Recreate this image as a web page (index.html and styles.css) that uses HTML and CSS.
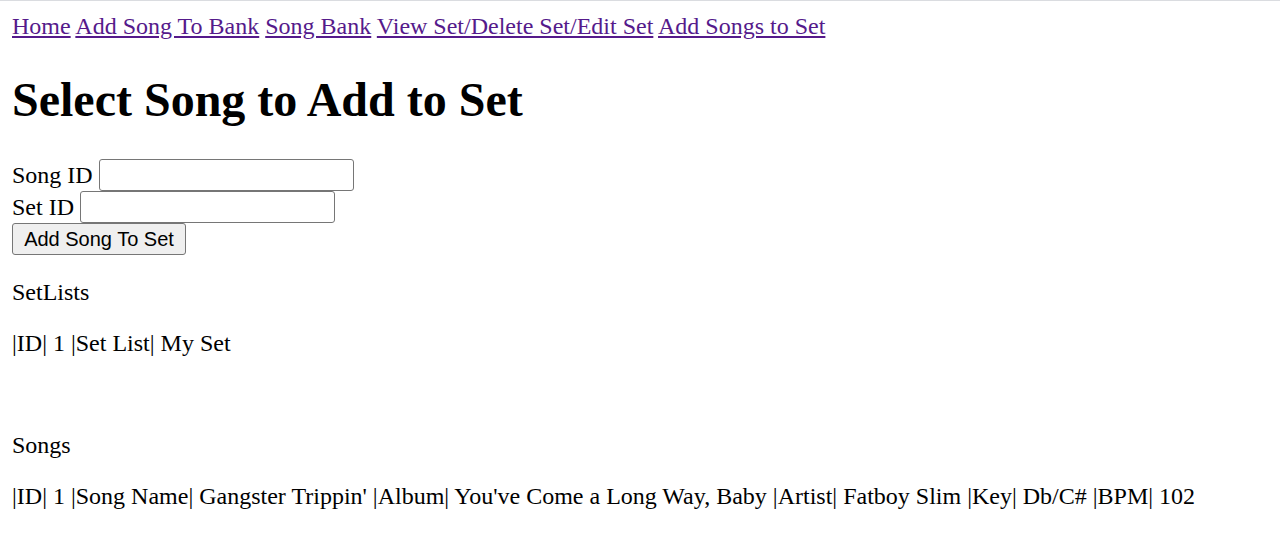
FILE: index.html
```html
<!DOCTYPE html>
<html>
<head>
<meta charset="utf-8">
<title>Add Songs to Set</title>
<link rel="stylesheet" href="styles.css">
</head>
<body>
<nav class="nav"><a href="#">Home</a> <a href="#">Add Song To Bank</a> <a href="#">Song Bank</a> <a href="#">View Set/Delete Set/Edit Set</a> <a href="#">Add Songs to Set</a></nav>
<h1 class="title">Select Song to Add to Set</h1>
<form class="form">
  <div class="row"><label>Song ID</label> <input class="field" type="text"></div>
  <div class="row"><label>Set ID</label> <input class="field" type="text"></div>
  <button class="btn" type="button">Add Song To Set</button>
</form>
<p class="para">SetLists</p>
<p class="para">|ID| 1 |Set List| My Set</p>
<p class="para gap">Songs</p>
<p class="para">|ID| 1 |Song Name| Gangster Trippin' |Album| You've Come a Long Way, Baby |Artist| Fatboy Slim |Key| Db/C# |BPM| 102</p>
</body>
</html>
```

FILE: styles.css
```css
html {
  border-top: 1px solid #dadce0;
  background: #fff;
}
body {
  margin: 0 12px;
  padding-top: 12px;
  font-family: "Liberation Serif", "Times New Roman", serif;
  font-size: 24px;
  color: #000;
}
.nav a {
  color: #551a8b;
  text-decoration: underline;
}
.title {
  font-size: 48px;
  font-weight: bold;
  margin: 32px 0;
}
.form {
  margin: 0;
}
.row {
  height: 32px;
  display: flex;
  align-items: center;
}
.row label {
  margin-right: 6px;
}
.field {
  box-sizing: border-box;
  width: 255px;
  height: 32px;
  border: 1px solid #767676;
  border-radius: 3px;
  padding: 2px 3px;
  font-size: 20px;
  background: #fff;
}
.btn {
  box-sizing: border-box;
  height: 32px;
  width: 174px;
  border: 1px solid #767676;
  border-radius: 3px;
  background: #efefef;
  font-family: "Liberation Sans", Arial, sans-serif;
  font-size: 20px;
  color: #000;
  padding: 0 9px;
}
.para {
  margin: 24px 0;
}
.gap {
  margin-top: 74.6px;
}
```
